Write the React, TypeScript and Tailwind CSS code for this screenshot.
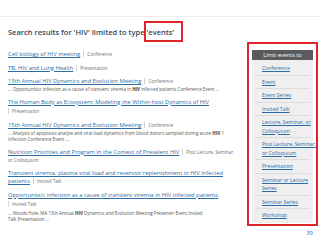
import React from "react";

const results = [
  { title: ["Cell biology of HIV meeting"], type: "Conference" },
  { title: ["TB, HIV and Lung Health"], type: "Presentation" },
  {
    title: ["13th Annual HIV Dynamics and Evolution Meeting"],
    type: "Conference",
    snippet: [
      ["... Opportunistic infection as a cause of transient viremia in ", "HIV", " infected patients Conference Event ..."],
    ],
  },
  {
    title: ["The Human Body as Ecosystem: Modeling the Within-host Dynamics of HIV"],
    type: "Presentation",
    typeBreak: true,
  },
  {
    title: ["15th Annual HIV Dynamics and Evolution Meeting"],
    type: "Conference",
    snippet: [
      ["... Analysis of apoptosis analyte and viral load dynamics from blood donors sampled during acute ", "HIV", "-1"],
      ["infection Conference Event ..."],
    ],
  },
  {
    title: ["Nutrition Priorities and Program in the Context of Prevalent HIV"],
    type: "Post Lecture, Seminar,",
    typeMore: "or Colloquium",
  },
  {
    title: ["Transient viremia, plasma viral load and reservoir replenishment in HIV infected", "patients"],
    type: "Invited Talk",
  },
  {
    title: ["Opportunistic infection as a cause of transient viremia in HIV infected patients"],
    type: "Invited Talk",
    typeBreak: true,
    snippet: [
      ["... Woods Hole, MA 13th Annual ", "HIV", " Dynamics and Evolution Meeting Presenter Event Invited"],
      ["Talk Presentation ..."],
    ],
  },
];

const limits = [
  ["Conference"],
  ["Event"],
  ["Event Series"],
  ["Invited Talk"],
  ["Lecture, Seminar, or", "Colloquium"],
  ["Post Lecture, Seminar,", "or Colloquium"],
  ["Presentation"],
  ["Seminar or Lecture", "Series"],
  ["Seminar Series"],
  ["Workshop"],
];

function Pipe() {
  return <span className="inline-block w-[1px] h-[6px] bg-[#d2d2d2] mx-[3px] align-[-1px]" />;
}

function TypeLabel({ text, pipe = true }: { text: string; pipe?: boolean }) {
  return (
    <>
      {pipe && <Pipe />}
      <span className="text-[4.6px] text-[#6f6f6f]">{text}</span>
    </>
  );
}

export default function App() {
  return (
    <div
      className="w-[320px] h-[240px] bg-white overflow-hidden flex flex-col text-[5px]"
      style={{ fontFamily: '"Open Sans", "DejaVu Sans", sans-serif' }}
    >
      {/* top strip */}
      <div className="h-[17px] shrink-0 border-b border-[#ececec]" />

      <div className="flex">
        {/* RESULTS */}
        <div className="w-[239px] pl-[8px] shrink-0">
          <h1 className="pt-[10px] text-[7.5px] leading-[10px] font-semibold text-[#3a4653] whitespace-nowrap">
            Search results for 'HIV' limited to type{" "}
            <span className="relative">
              'events'
              <span className="absolute left-[-3px] right-[-9px] top-[-6px] bottom-[-5px] border-2 border-[#e0262a]" />
            </span>
          </h1>

          <div className="mt-[13px] flex flex-col gap-[5.5px]">
            {results.map((r, i) => (
              <div key={i} className="whitespace-nowrap">
                {r.title.map((line, j) => (
                  <div key={j} className="text-[5.8px] leading-[8px]">
                    <a className="text-[#2d6ca5] underline underline-offset-[1px]">{line}</a>
                    {j === r.title.length - 1 && !r.typeBreak && <TypeLabel text={r.type} />}
                  </div>
                ))}
                {r.typeBreak && (
                  <div className="text-[4.6px] leading-[9px] pt-[1px]">
                    <span className="inline-block w-[1px] h-[6px] bg-[#d2d2d2] mr-[3px] align-[-1px]" />
                    <TypeLabel text={r.type} pipe={false} />
                  </div>
                )}
                {r.typeMore && (
                  <div className="text-[4.6px] leading-[8px]">
                    <TypeLabel text={r.typeMore} pipe={false} />
                  </div>
                )}
                {r.snippet && (
                  <div className="mt-[1px] text-[4.5px] leading-[6px] text-[#555]">
                    {r.snippet.map((s, k) => (
                      <div key={k}>
                        {s.map((part, m) =>
                          part === "HIV" ? (
                            <b key={m} className="text-[#333]">
                              {part}
                            </b>
                          ) : (
                            <span key={m}>{part}</span>
                          )
                        )}
                      </div>
                    ))}
                  </div>
                )}
              </div>
            ))}
          </div>
        </div>

        {/* LIMIT SIDEBAR */}
        <div className="w-[71px] ml-[8px] mt-[25px] shrink-0 flex flex-col">
          <div className="border-2 border-[#e0262a] pl-[3px] pr-[3px] pt-[6px] pb-[1px]">
            <div className="bg-[#efefef] pb-[1px]">
              <div className="bg-[#5b5b5b] text-white text-[5.6px] leading-[10px] text-center">
                Limit events to
              </div>
              <div className="pt-[2px]">
                {limits.map((l, i) => (
                  <div
                    key={i}
                    className={`mx-[3px] pl-[7px] py-[2px] ${i < limits.length - 1 ? "border-b border-[#dddddd]" : ""}`}
                  >
                    {l.map((line, j) => (
                      <div key={j} className="text-[5.2px] leading-[8.5px] whitespace-nowrap">
                        <a className="text-[#2d6ca5] underline underline-offset-[1px]">{line}</a>
                      </div>
                    ))}
                  </div>
                ))}
              </div>
            </div>
          </div>
          <div className="text-right pr-[5px] mt-[3px] text-[6px] leading-[8px] text-[#3a6ea8]">39</div>
        </div>
      </div>
    </div>
  );
}
